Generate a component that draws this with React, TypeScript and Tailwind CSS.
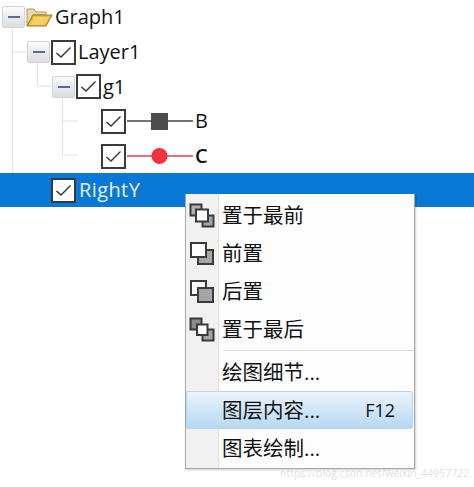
import React from "react";

const font = { fontFamily: '"Open Sans","Noto Sans CJK SC",sans-serif' };

function Exp() {
  return (
    <div className="flex h-[22px] w-[23px] shrink-0 items-center justify-center rounded-[2px] border border-[#d4d4d8] bg-gradient-to-b from-[#fafafa] to-[#dcdde2]">
      <div className="h-[2px] w-[12px] bg-[#5a6a9c]" />
    </div>
  );
}

function Check() {
  return (
    <div className="flex h-[25px] w-[25px] shrink-0 items-center justify-center border-2 border-[#3a3a3a] bg-white">
      <svg width="17" height="13" viewBox="0 0 17 13" fill="none">
        <path d="M1.5 7 L6 11 L15.5 1.5" stroke="#333" strokeWidth="1.4" />
      </svg>
    </div>
  );
}

function Folder() {
  return (
    <svg width="27" height="22" viewBox="0 0 27 22" className="shrink-0">
      <path d="M1 20 V3 H8 L10 6 H20 V9 H7 L1 20Z" fill="#e8d9a0" stroke="#a89868" strokeWidth="1" />
      <path d="M1 20 L7 9 H26 L20 20Z" fill="#e9b83c" stroke="#9c7a26" strokeWidth="1" />
      <path d="M4 19 L8.5 11 H23 L18 19Z" fill="#f5cf62" />
    </svg>
  );
}

function Leaf({ color, text, square, bold }: { color: string; text: string; square?: boolean; bold?: boolean }) {
  return (
    <div className="flex h-[34.7px] items-center pl-[101px]">
      <Check />
      <svg width="68" height="20" viewBox="0 0 68 20" className="shrink-0">
        <line x1="1" y1="10" x2="67" y2="10" stroke={color} strokeWidth="1.3" />
        {square ? (
          <rect x="25" y="2" width="17" height="17" fill="#4c4c4c" />
        ) : (
          <circle cx="33.5" cy="10" r="8" fill="#f0323c" />
        )}
      </svg>
      <span className={`ml-[1px] text-[20px] text-[#111] ${bold ? "font-semibold" : ""}`}>{text}</span>
    </div>
  );
}

function Stack({ kind }: { kind: number }) {
  const s = { stroke: "#3a3a3a", strokeWidth: 2 };
  if (kind === 1 || kind === 2) {
    const back = <rect x="9" y="9" width="15" height="14" fill="#a4a4a4" {...s} />;
    const front = <rect x="2" y="2" width="15" height="14" fill="#fff" {...s} />;
    return (
      <svg width="26" height="25" viewBox="0 0 26 25" className="shrink-0">
        {kind === 1 ? back : front}
        {kind === 1 ? front : back}
      </svg>
    );
  }
  return (
    <svg width="26" height="25" viewBox="0 0 26 25" className="shrink-0">
      <rect x="1.5" y="1.5" width="11" height="11" fill={kind === 0 ? "#b0b0b0" : "#8c8c8c"} {...s} />
      <rect x="13.5" y="12.5" width="11" height="11" fill="#a4a4a4" {...s} />
      {kind === 0 ? (
        <rect x="7" y="6.5" width="12" height="12" fill="#fff" {...s} />
      ) : (
        <rect x="8" y="7.5" width="10.5" height="10.5" fill="#fff" {...s} />
      )}
    </svg>
  );
}

function Item({ label, icon, shortcut, active }: { label: string; icon?: number; shortcut?: string; active?: boolean }) {
  return (
    <div className="relative flex h-[38px] items-center">
      {active && (
        <div className="absolute inset-x-0 inset-y-0 mr-[1px] rounded-[2px] border border-[#b8d6ee] bg-gradient-to-b from-[#eaf4fc] to-[#b6d8f2]" />
      )}
      <div className="relative flex h-full w-[32px] shrink-0 items-center justify-center">
        {icon !== undefined && <Stack kind={icon} />}
      </div>
      <span className="relative ml-[4px] mt-[1px] text-[20.5px] text-[#111]">{label}</span>
      {shortcut && <span className="relative ml-auto mr-[19px] text-[18px] text-[#111]">{shortcut}</span>}
    </div>
  );
}

export default function App() {
  return (
    <div className="relative h-[487px] w-[474px] overflow-hidden bg-white" style={font}>
      {/* tree guide lines */}
      <svg className="absolute left-0 top-0" width="120" height="200" viewBox="0 0 120 200">
        <g stroke="#e2e2e2" strokeWidth="1" fill="none">
          <path d="M12.5 28 V190 H26" />
          <path d="M12.5 52 H27" />
          <path d="M37.5 62 V86 H52" />
          <path d="M62.5 98 V155 H78" />
          <path d="M62.5 121 H78" />
        </g>
      </svg>

      <div className="relative">
        <div className="flex h-[34.7px] items-center pl-[2px]">
          <Exp />
          <div className="ml-[1px]"><Folder /></div>
          <span className="ml-[2px] text-[20px] text-[#111]">Graph1</span>
        </div>
        <div className="flex h-[34.7px] items-center pl-[27px]">
          <Exp />
          <div className="ml-[1px]"><Check /></div>
          <span className="ml-[2px] text-[20px] text-[#111]">Layer1</span>
        </div>
        <div className="flex h-[34.7px] items-center pl-[52px]">
          <Exp />
          <div className="ml-[1px]"><Check /></div>
          <span className="ml-[2px] text-[20px] text-[#111]">g1</span>
        </div>
        <Leaf color="#444" text="B" square />
        <Leaf color="#ee3b46" text="C" bold />
        <div className="flex h-[34px] items-center bg-[#0a78d7] pl-[51px]">
          <Check />
          <span className="ml-[3px] text-[20px] tracking-[0.4px] text-[#e8f4ff]">RightY</span>
        </div>
      </div>

      {/* context menu */}
      <div className="absolute left-[185px] top-[194px] h-[275px] w-[230px] border border-[#a8a8a8] border-t-0 bg-[#fdfdfd] pt-[2px] shadow-[1px_1px_2px_rgba(0,0,0,0.2)]">
        <div className="absolute bottom-0 left-0 top-0 w-[33px] border-r border-[#e0e0e0] bg-[#f1f1f1]" />
        <div className="relative">
          <Item label="置于最前" icon={0} />
          <Item label="前置" icon={1} />
          <Item label="后置" icon={2} />
          <Item label="置于最后" icon={3} />
          <div className="flex h-[5px] items-center pl-[37px]">
            <div className="h-[1px] w-full bg-[#dcdcdc]" />
          </div>
          <Item label="绘图细节..." />
          <Item label="图层内容..." shortcut="F12" active />
          <Item label="图表绘制..." />
        </div>
      </div>

      {/* watermark */}
      <div className="absolute left-[280px] top-[466px] whitespace-nowrap text-[10.5px] text-[#e2e2e2]">
        https://blog.csdn.net/weixin_44957722
      </div>
    </div>
  );
}
